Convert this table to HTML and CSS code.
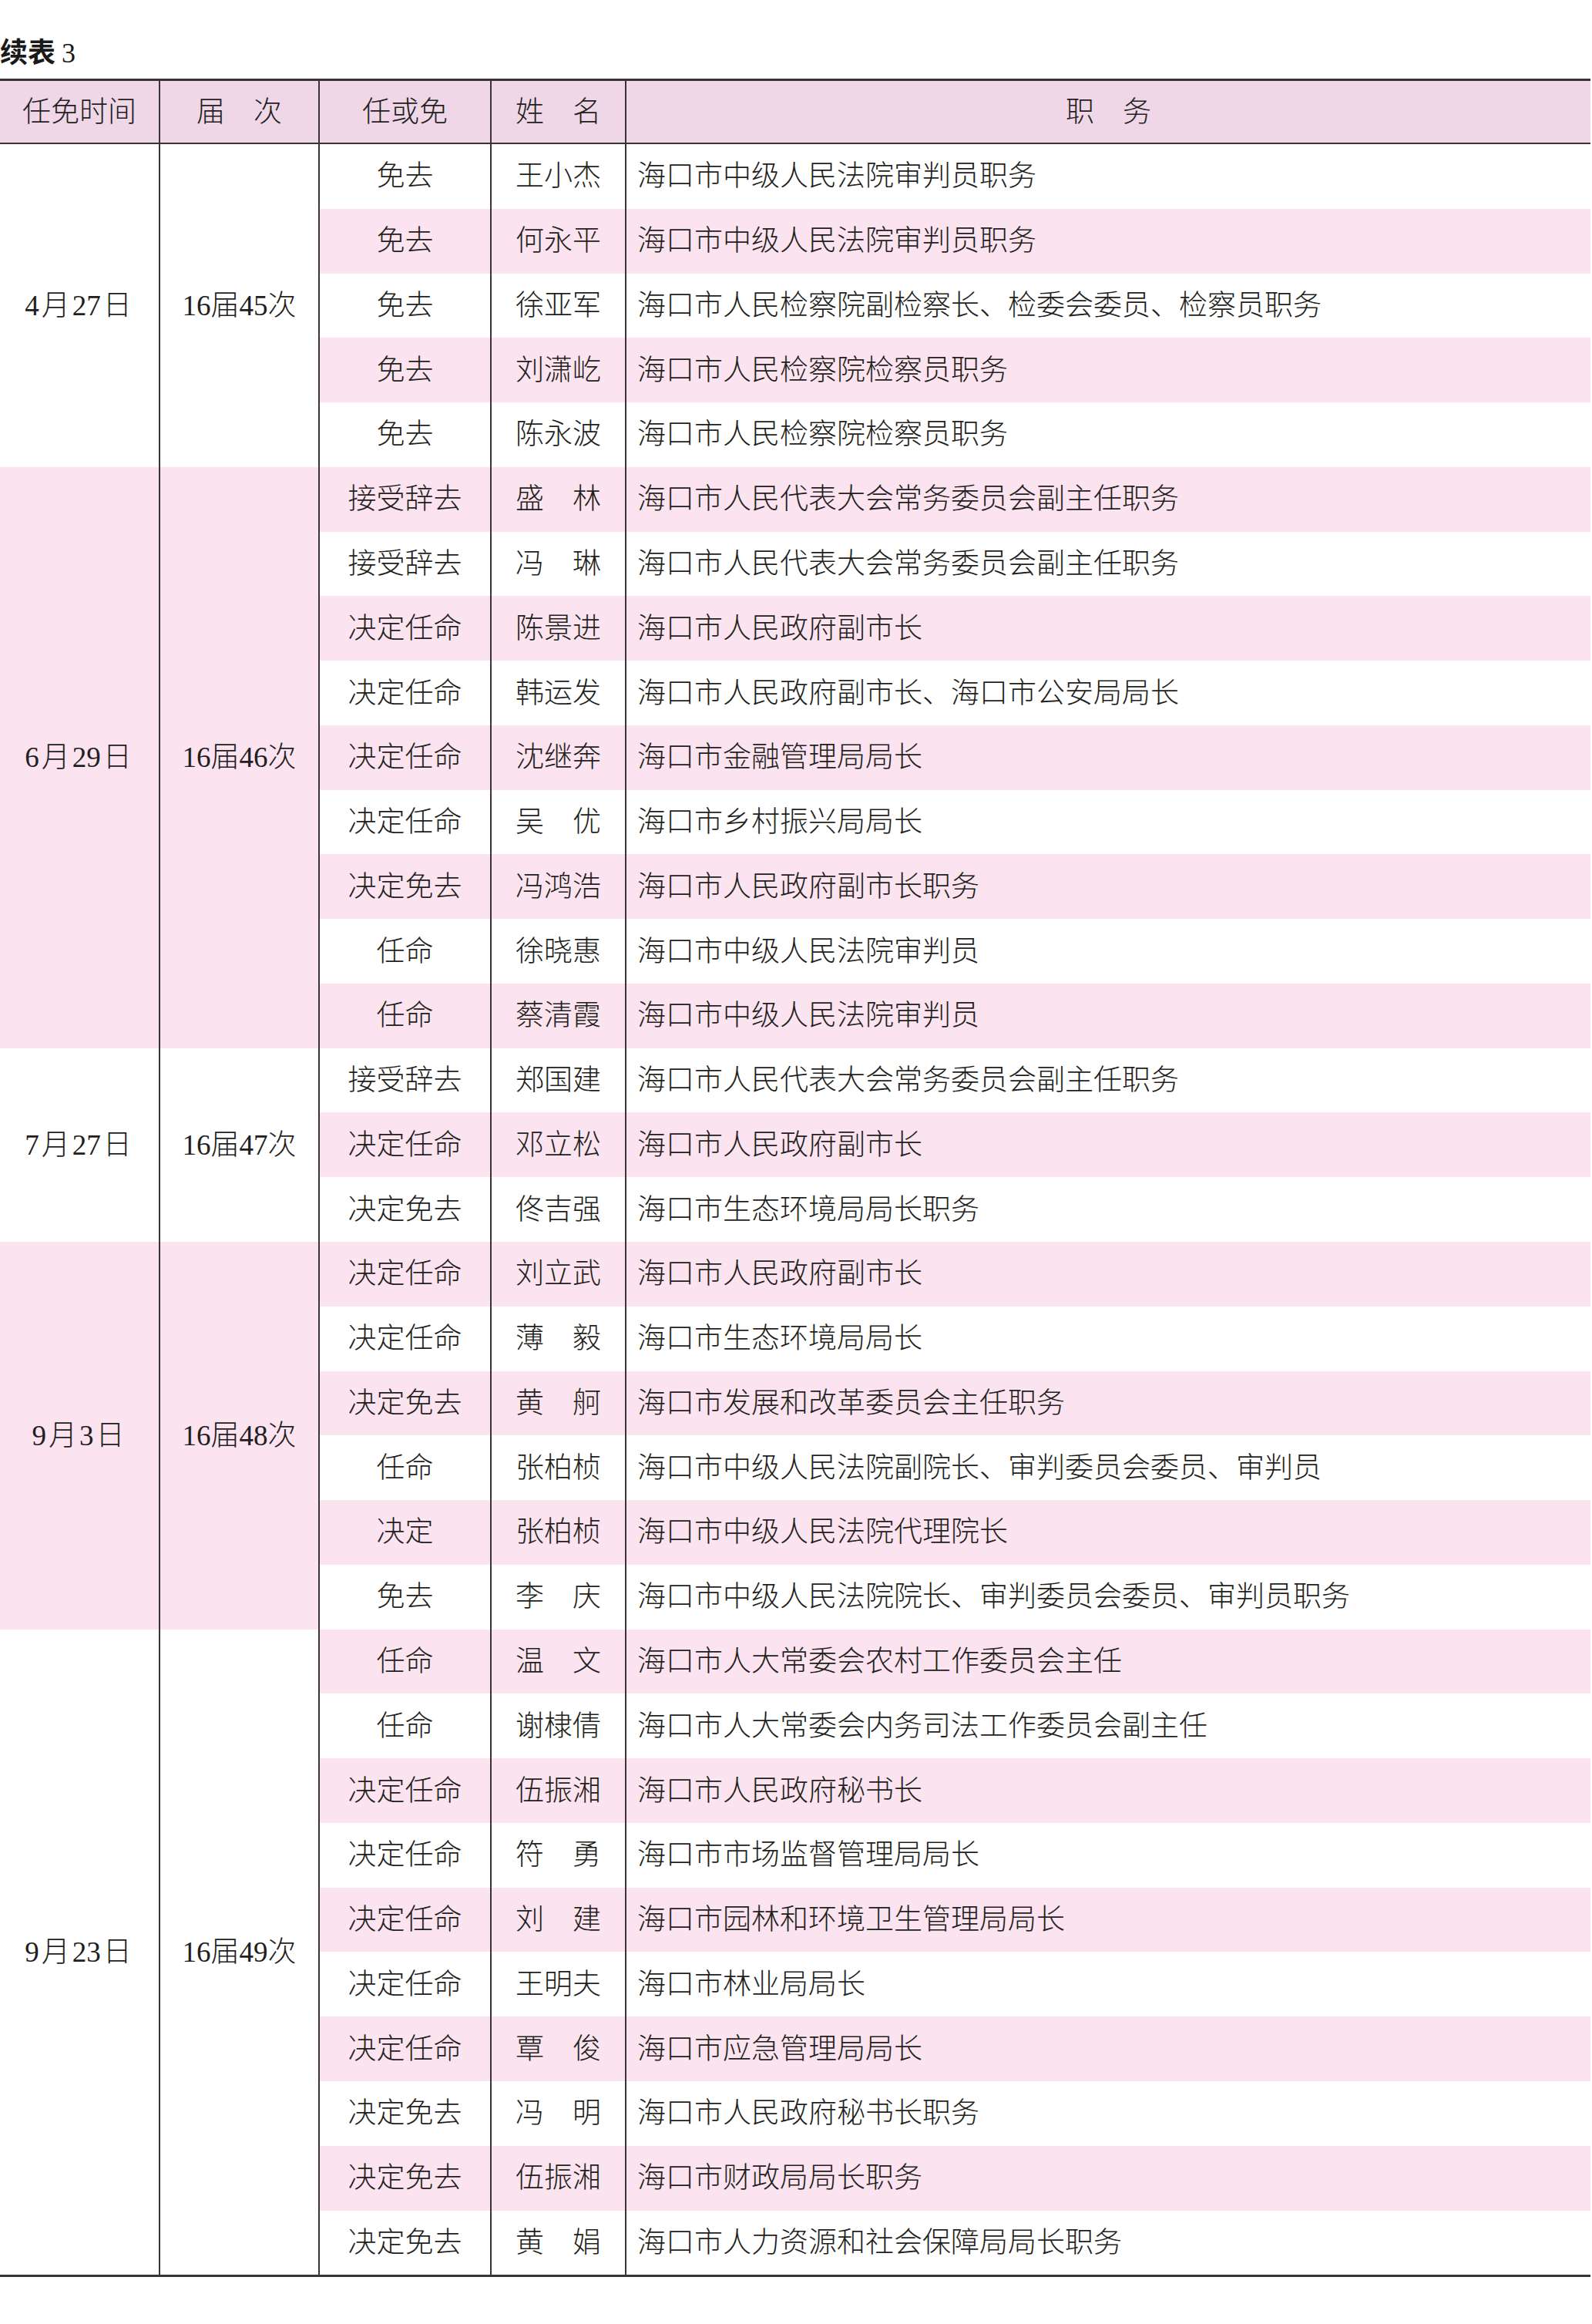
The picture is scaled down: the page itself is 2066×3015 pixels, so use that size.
FILE: index.html
```html
<!DOCTYPE html>
<html lang="zh-CN">
<head>
<meta charset="utf-8">
<title>续表3</title>
<link rel="stylesheet" href="styles.css">
</head>
<body>
<div class="page">
  <div class="title">续表<span class="num">3</span></div>
  <div class="sheet">
    <div class="hd c1">任免时间</div>
    <div class="hd c2">届　次</div>
    <div class="hd c3">任或免</div>
    <div class="hd c4">姓　名</div>
    <div class="hd c5 center">职　务</div>

    <div class="c1 g5">4<span class="sp">月</span>27<span class="sp">日</span></div>
    <div class="c2 g5">16届45次</div>
    <div class="c3">免去</div><div class="c4">王小杰</div><div class="c5">海口市中级人民法院审判员职务</div>
    <div class="c3 pk">免去</div><div class="c4 pk">何永平</div><div class="c5 pk">海口市中级人民法院审判员职务</div>
    <div class="c3">免去</div><div class="c4">徐亚军</div><div class="c5">海口市人民检察院副检察长、检委会委员、检察员职务</div>
    <div class="c3 pk">免去</div><div class="c4 pk">刘潇屹</div><div class="c5 pk">海口市人民检察院检察员职务</div>
    <div class="c3">免去</div><div class="c4">陈永波</div><div class="c5">海口市人民检察院检察员职务</div>

    <div class="c1 g9 pk">6<span class="sp">月</span>29<span class="sp">日</span></div>
    <div class="c2 g9 pk">16届46次</div>
    <div class="c3 pk">接受辞去</div><div class="c4 pk">盛　林</div><div class="c5 pk">海口市人民代表大会常务委员会副主任职务</div>
    <div class="c3">接受辞去</div><div class="c4">冯　琳</div><div class="c5">海口市人民代表大会常务委员会副主任职务</div>
    <div class="c3 pk">决定任命</div><div class="c4 pk">陈景进</div><div class="c5 pk">海口市人民政府副市长</div>
    <div class="c3">决定任命</div><div class="c4">韩运发</div><div class="c5">海口市人民政府副市长、海口市公安局局长</div>
    <div class="c3 pk">决定任命</div><div class="c4 pk">沈继奔</div><div class="c5 pk">海口市金融管理局局长</div>
    <div class="c3">决定任命</div><div class="c4">吴　优</div><div class="c5">海口市乡村振兴局局长</div>
    <div class="c3 pk">决定免去</div><div class="c4 pk">冯鸿浩</div><div class="c5 pk">海口市人民政府副市长职务</div>
    <div class="c3">任命</div><div class="c4">徐晓惠</div><div class="c5">海口市中级人民法院审判员</div>
    <div class="c3 pk">任命</div><div class="c4 pk">蔡清霞</div><div class="c5 pk">海口市中级人民法院审判员</div>

    <div class="c1 g3">7<span class="sp">月</span>27<span class="sp">日</span></div>
    <div class="c2 g3">16届47次</div>
    <div class="c3">接受辞去</div><div class="c4">郑国建</div><div class="c5">海口市人民代表大会常务委员会副主任职务</div>
    <div class="c3 pk">决定任命</div><div class="c4 pk">邓立松</div><div class="c5 pk">海口市人民政府副市长</div>
    <div class="c3">决定免去</div><div class="c4">佟吉强</div><div class="c5">海口市生态环境局局长职务</div>

    <div class="c1 g6 pk">9<span class="sp">月</span>3<span class="sp">日</span></div>
    <div class="c2 g6 pk">16届48次</div>
    <div class="c3 pk">决定任命</div><div class="c4 pk">刘立武</div><div class="c5 pk">海口市人民政府副市长</div>
    <div class="c3">决定任命</div><div class="c4">薄　毅</div><div class="c5">海口市生态环境局局长</div>
    <div class="c3 pk">决定免去</div><div class="c4 pk">黄　舸</div><div class="c5 pk">海口市发展和改革委员会主任职务</div>
    <div class="c3">任命</div><div class="c4">张柏桢</div><div class="c5">海口市中级人民法院副院长、审判委员会委员、审判员</div>
    <div class="c3 pk">决定</div><div class="c4 pk">张柏桢</div><div class="c5 pk">海口市中级人民法院代理院长</div>
    <div class="c3">免去</div><div class="c4">李　庆</div><div class="c5">海口市中级人民法院院长、审判委员会委员、审判员职务</div>

    <div class="c1 g10">9<span class="sp">月</span>23<span class="sp">日</span></div>
    <div class="c2 g10">16届49次</div>
    <div class="c3 pk">任命</div><div class="c4 pk">温　文</div><div class="c5 pk">海口市人大常委会农村工作委员会主任</div>
    <div class="c3">任命</div><div class="c4">谢棣倩</div><div class="c5">海口市人大常委会内务司法工作委员会副主任</div>
    <div class="c3 pk">决定任命</div><div class="c4 pk">伍振湘</div><div class="c5 pk">海口市人民政府秘书长</div>
    <div class="c3">决定任命</div><div class="c4">符　勇</div><div class="c5">海口市市场监督管理局局长</div>
    <div class="c3 pk">决定任命</div><div class="c4 pk">刘　建</div><div class="c5 pk">海口市园林和环境卫生管理局局长</div>
    <div class="c3">决定任命</div><div class="c4">王明夫</div><div class="c5">海口市林业局局长</div>
    <div class="c3 pk">决定任命</div><div class="c4 pk">覃　俊</div><div class="c5 pk">海口市应急管理局局长</div>
    <div class="c3">决定免去</div><div class="c4">冯　明</div><div class="c5">海口市人民政府秘书长职务</div>
    <div class="c3 pk">决定免去</div><div class="c4 pk">伍振湘</div><div class="c5 pk">海口市财政局局长职务</div>
    <div class="c3">决定免去</div><div class="c4">黄　娟</div><div class="c5">海口市人力资源和社会保障局局长职务</div>
  </div>
</div>
</body>
</html>
```

FILE: styles.css
```css
html, body {
  margin: 0;
  padding: 0;
  background: #ffffff;
}

.page {
  width: 2064px;
  font-family: "Liberation Serif", "Noto Sans CJK SC", serif;
  color: #231f20;
}

.title {
  height: 102px;
  box-sizing: border-box;
  padding-top: 47px;
  font-family: "Noto Sans CJK SC", sans-serif;
  font-weight: 700;
  font-size: 36px;
  line-height: 36px;
  color: #1a1a1a;
}

.title .num {
  font-family: "Liberation Serif", serif;
  font-weight: 400;
  margin-left: 8px;
}

.sheet {
  display: grid;
  grid-template-columns: 206px 207px 223px 175px 1253px;
  grid-template-rows: 82px;
  grid-auto-rows: 83.77px;
  border-top: 3px solid #3a3436;
  border-bottom: 3px solid #3a3436;
  font-size: 37px;
  font-weight: 300;
}

.sheet > div {
  box-sizing: border-box;
  display: flex;
  align-items: center;
  justify-content: center;
  white-space: nowrap;
  line-height: 1;
}

.sheet .hd {
  grid-row: 1;
  background: #efd7e8;
  border-bottom: 2px solid #3a3436;
}

.c1 { grid-column: 1; }
.c2 { grid-column: 2; border-left: 2px solid #3a3436; }
.c3 { grid-column: 3; border-left: 2px solid #3a3436; }
.c4 { grid-column: 4; border-left: 2px solid #3a3436; }
.sheet .c5 {
  grid-column: 5;
  border-left: 2px solid #3a3436;
  justify-content: flex-start;
  padding-left: 14px;
}
.sheet .c5.center {
  justify-content: center;
  padding-left: 0;
}

.g3 { grid-row: span 3; }
.g5 { grid-row: span 5; }
.g6 { grid-row: span 6; }
.g9 { grid-row: span 9; }
.g10 { grid-row: span 10; }

.pk { background: #fbe3ef; }

.sp { margin: 0 3px; }
```
